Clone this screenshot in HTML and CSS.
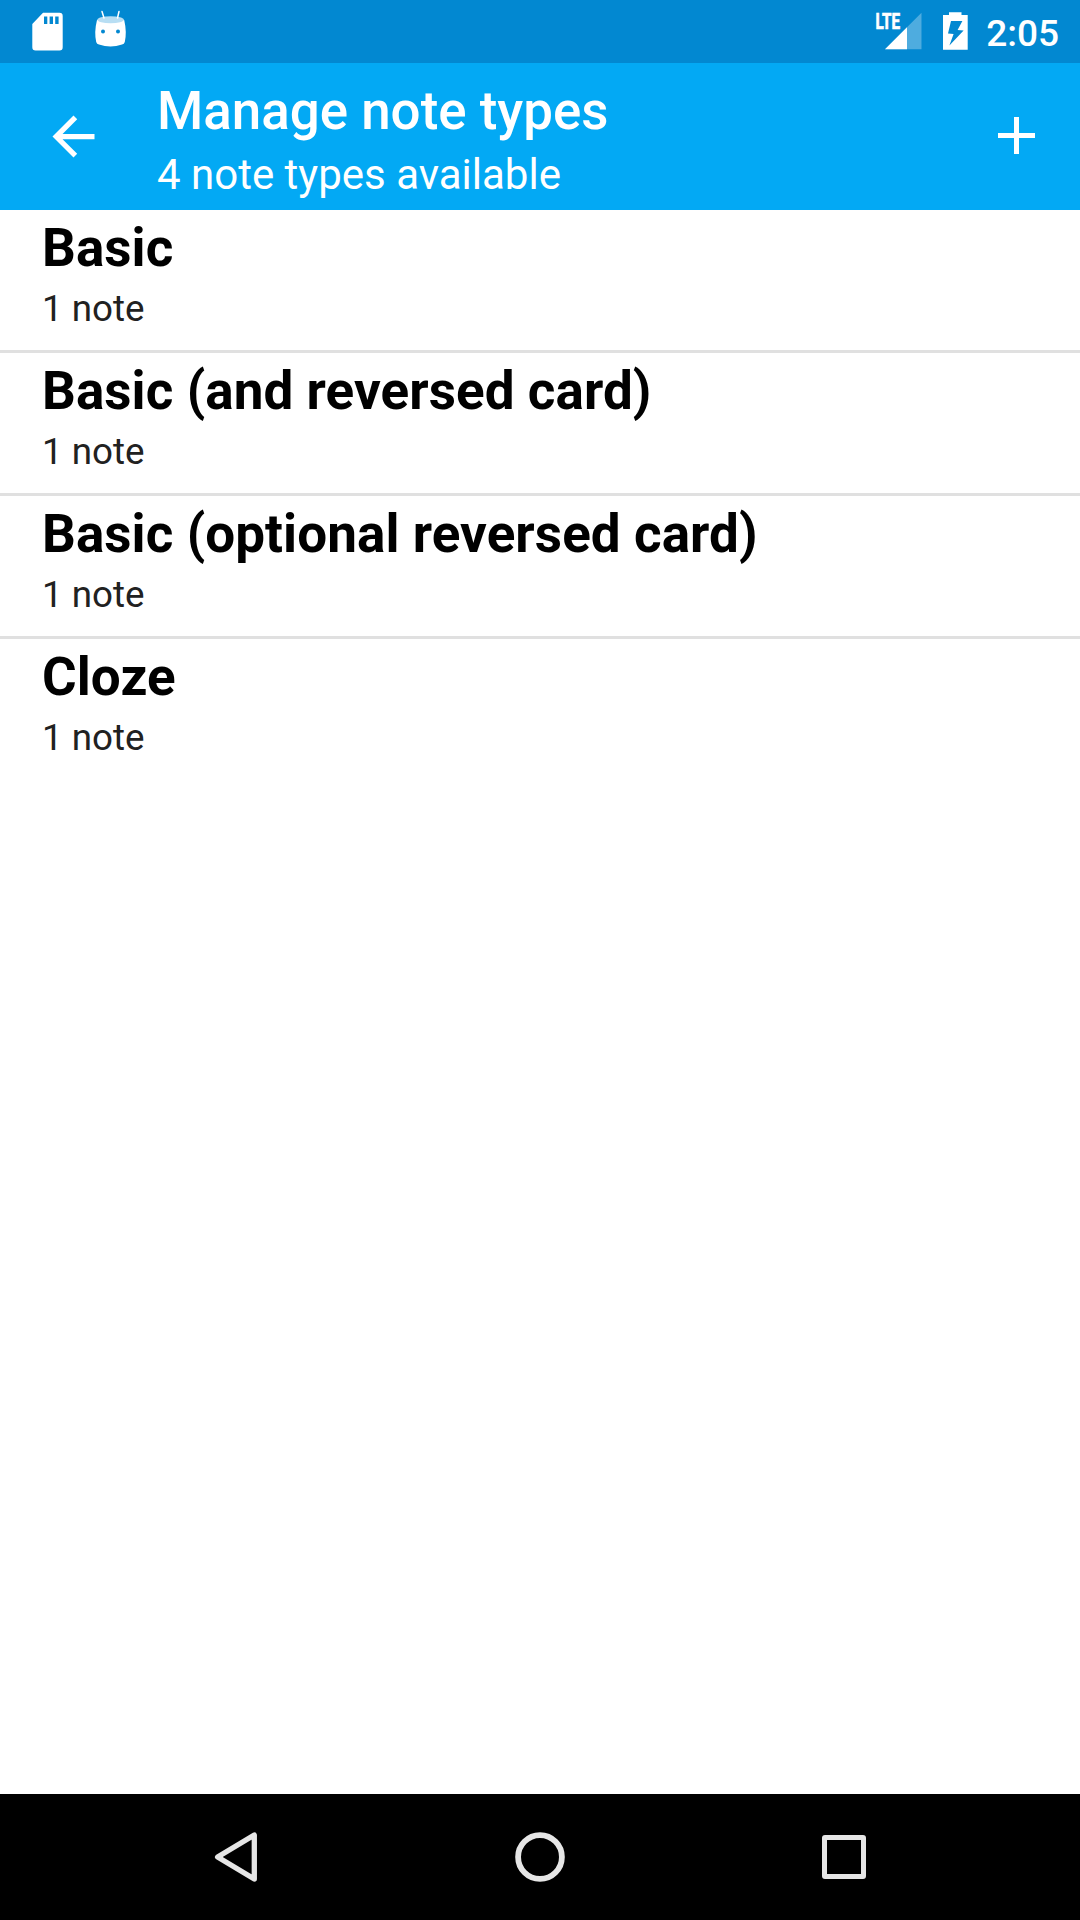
FILE: index.html
```html
<!DOCTYPE html>
<html lang="en">
<head>
<meta charset="utf-8">
<title>Manage note types</title>
<link rel="stylesheet" href="styles.css">
</head>
<body>
<div class="screen">
  <div class="status-bar">
    <svg class="status-left" width="100" height="63" viewBox="30 0 100 63">
      <path fill="#fff" fill-rule="evenodd" d="M43 12.7H59.5Q62.7 12.7 62.7 16V47.2Q62.7 50.5 59.5 50.5H35.6Q32.3 50.5 32.3 47.2V24ZM44 16.5V24H47.3V16.5ZM49.6 16.5V24H53V16.5ZM55.2 16.5V24H58.6V16.5Z"/>
      <path fill="#fff" d="M97 20Q94 32 96.200 42Q96.800 44 99 44.600Q110.500 48.400 122 44.600Q124.200 44 124.800 42Q127 32 124.200 20Z"/>
      <ellipse cx="110.600" cy="19.700" rx="13.300" ry="3.500" fill="#b8def3"/>
      <path d="M102 11.500L104 18M119 11.500L117.500 18" stroke="#fff" stroke-width="1.500" stroke-linecap="round"/>
      <circle cx="103" cy="31.500" r="2" fill="#0288d1"/>
      <circle cx="118" cy="31.500" r="2" fill="#0288d1"/>
    </svg>
    <div class="status-right">
      <svg width="94" height="63" viewBox="875 0 94 63">
        <text class="lte" x="875.500" y="29" textLength="24.500" lengthAdjust="spacingAndGlyphs">LTE</text>
        <path fill="#fff" fill-opacity=".3" d="M885 49.300L921.500 12.800V49.300Z"/>
        <path fill="#fff" d="M885 49.300L907 27.300V49.300Z"/>
        <path fill="#fff" fill-rule="evenodd" d="M949 12.300H961.500V15H967.700V49.700H943V15H949ZM951 21L948 33.500L953.600 34L949.400 45.600L963.600 30.600L957.600 30L962.400 21Z"/>
      </svg>
      <span class="clock">2:05</span>
    </div>
  </div>
  <header class="toolbar">
    <svg class="back" width="63" height="63" viewBox="0 0 24 24"><path fill="#fff" d="M20 11H7.830l5.590-5.590L12 4l-8 8 8 8 1.410-1.410L7.830 13H20v-2z"/></svg>
    <div class="heading">
      <h1 class="title">Manage note types</h1>
      <div class="subtitle">4 note types available</div>
    </div>
    <svg class="add" width="63" height="63" viewBox="0 0 63 63"><path fill="#fff" d="M29 13H34V29H50V34H34V50H29V34H13V29H29Z"/></svg>
  </header>
  <main class="list">
    <div class="row"><div class="name">Basic</div><div class="count">1 note</div></div>
    <div class="row"><div class="name">Basic (and reversed card)</div><div class="count">1 note</div></div>
    <div class="row"><div class="name">Basic (optional reversed card)</div><div class="count">1 note</div></div>
    <div class="row"><div class="name">Cloze</div><div class="count">1 note</div></div>
  </main>
  <nav class="nav-bar">
    <svg width="60" height="60" viewBox="0 0 60 60"><path stroke-width="5.300" d="M48.300 8V52L11.600 30Z"/></svg>
    <svg width="60" height="60" viewBox="0 0 60 60"><circle stroke-width="5.800" cx="30" cy="30" r="21.900"/></svg>
    <svg width="60" height="60" viewBox="0 0 60 60"><rect stroke-width="5" x="10.500" y="10.500" width="39" height="39" rx=".5"/></svg>
  </nav>
</div>
</body>
</html>
```
FILE: styles.css
```css
body {
  margin: 0;
  font-family: Roboto, "Liberation Sans", sans-serif;
}

svg {
  display: block;
  flex: none;
}

.screen {
  display: flex;
  flex-direction: column;
  width: 1080px;
  height: 1920px;
  background: #fff;
}

.status-bar {
  display: flex;
  justify-content: space-between;
  height: 63px;
  padding: 0 21px 0 30px;
  background: #0288d1;
}

.status-right {
  display: flex;
  gap: 17px;
}

.lte {
  font-size: 21.5px;
  font-weight: 700;
  fill: #fff;
  stroke: #fff;
  stroke-width: 0.7px;
}

.clock {
  color: #fff;
  font-size: 37px;
  font-weight: 500;
  line-height: 67px;
}

.toolbar {
  display: flex;
  box-sizing: border-box;
  height: 147px;
  padding: 0 32px 0 42px;
  background: #03a9f4;
  color: #fff;
}

.back {
  margin-top: 42px;
}

.add {
  margin-top: 41px;
}

.heading {
  flex: 1;
  padding: 17px 0 0 52px;
}

.title {
  margin: 0 0 8px;
  font-size: 52.9px;
  font-weight: 500;
  line-height: 62px;
}

.subtitle {
  font-size: 42px;
  line-height: 50px;
}

.list {
  flex: 1;
}

.row {
  box-sizing: border-box;
  height: 143px;
  padding: 7px 42px 0;
  border-bottom: 3px solid #e0e0e0;
}

.row:last-child {
  border-bottom: 0;
}

.name {
  color: #000;
  font-size: 53px;
  font-weight: 700;
  letter-spacing: 0.07px;
  line-height: 62px;
}

.count {
  margin-top: 8px;
  color: #212121;
  font-size: 36.75px;
  line-height: 44px;
}

.nav-bar {
  display: flex;
  justify-content: space-between;
  align-items: center;
  height: 126px;
  padding: 0 206px;
  background: #000;
  fill: none;
  stroke: #e6e6e6;
  stroke-linejoin: round;
}
```
